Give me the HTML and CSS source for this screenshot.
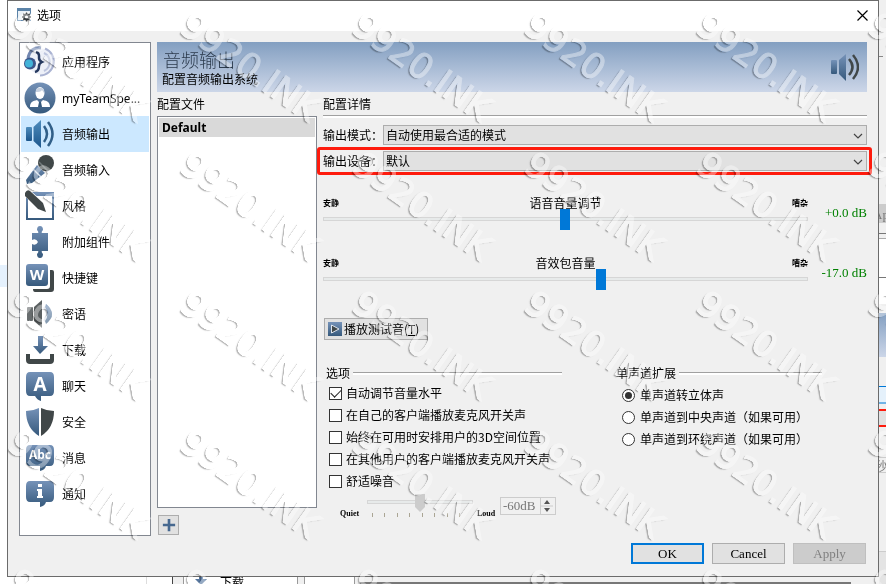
FILE: index.html
```html
<!DOCTYPE html>
<html lang="zh-CN">
<head>
    <meta charset="UTF-8">
    <meta name="viewport" content="width=device-width, initial-scale=1.0">
    <title>选项</title>
    <link rel="stylesheet" href="styles.css">
</head>
<body>

    <!-- 公用渐变和图标 -->
    <svg class="defs" width="0" height="0" aria-hidden="true">
        <defs>
            <linearGradient id="blue" x1="0" y1="0" x2="0" y2="1">
                <stop offset="0" stop-color="#7592b8"/>
                <stop offset="1" stop-color="#36597c"/>
            </linearGradient>
            <linearGradient id="bright" x1="0" y1="0" x2="0" y2="1">
                <stop offset="0" stop-color="#4e8cbc"/>
                <stop offset="1" stop-color="#1c568c"/>
            </linearGradient>
        </defs>
        <symbol id="plus" viewBox="0 0 16 16">
            <path d="M8 1v14M1 8h14" stroke="#46688f" stroke-width="3" fill="none"/>
        </symbol>
        <symbol id="chevron" viewBox="0 0 10 6">
            <path d="M1 1l4 4 4-4" stroke="#444" stroke-width="1.2" fill="none"/>
        </symbol>
    </svg>

    <!-- 后面的窗口 -->
    <div class="back-left"></div>
    <div class="back-right">
        <div class="strip s1"></div>
        <div class="strip s2">Ap</div>
        <div class="strip s3"></div>
        <div class="strip s4"></div>
        <div class="strip s5"></div>
        <div class="strip s6"></div>
        <div class="strip s7"></div>
        <div class="strip s8"></div>
        <div class="strip s9"></div>
        <div class="strip s10">秒</div>
        <div class="strip s11"></div>
        <div class="strip s12"></div>
    </div>
    <div class="back-bottom">
        <div class="piece p1"></div>
        <div class="piece p2"></div>
        <div class="piece p3"></div>
        <div class="piece p4">
            <svg width="12" height="8" viewBox="0 0 12 8"><path d="M4 0h4v2h4L6 8 0 2h4z" fill="#5878a0"/></svg>
            <span>下载</span>
        </div>
        <div class="piece p5"></div>
        <div class="piece p6"></div>
        <div class="piece p7"></div>
    </div>

    <!-- 选项窗口 -->
    <main class="dialog">
        <header class="titlebar">
            <svg width="15" height="14" viewBox="0 0 15 14">
                <rect x=".5" y=".5" width="13" height="12" fill="#eaf1f7" stroke="#5b83a8"/>
                <path d="M0 0h14v3H0z" fill="#5b83a8"/>
                <circle cx="9.500" cy="9" r="5" fill="#fff"/>
                <circle cx="9.500" cy="9" r="2.500" fill="none" stroke="#3d4347" stroke-width="1.800"/>
                <path d="M9.500 4.500v2M9.500 11.500v2M5 9h2M12 9h2M6.300 5.800l1.400 1.400M11.300 10.800l1.400 1.400M6.300 12.200l1.400-1.400M11.300 7.200l1.400-1.400" stroke="#3d4347" stroke-width="1.300"/>
            </svg>
            <h1>选项</h1>
            <button class="close" type="button" aria-label="关闭">
                <svg width="11" height="11" viewBox="0 0 11 11"><path d="M.5.5l10 10M10.500.5l-10 10" stroke="#000" stroke-width="1.200"/></svg>
            </button>
        </header>

        <div class="body">
            <nav class="sidebar">
                <a href="#">
                    <svg viewBox="0 0 32 32">
                        <circle cx="17" cy="15.500" r="13" fill="#edf0f8"/>
                        <path d="M21 2.500a14 14 0 0 1-5 27" fill="none" stroke="#aab3d2" stroke-width="2"/>
                        <path d="M20 7a10 10 0 0 1 0 18" fill="none" stroke="#bdc5de" stroke-width="2"/>
                        <path d="M4 13C5 4 11 1 17 2" fill="none" stroke="#7387b0" stroke-width="3"/>
                        <path d="M12 6c4 1 3 4 3 6s1 3 3 4c-2 1-3 2-3 4s0 5-4 6" fill="none" stroke="#26395f" stroke-width="2.500"/>
                        <circle cx="6" cy="17.500" r="6" fill="#3c568b"/>
                        <circle cx="5" cy="17.500" r="4" fill="#43b3d8"/>
                    </svg>
                    <span>应用程序</span>
                </a>
                <a href="#">
                    <svg viewBox="0 0 32 32">
                        <circle cx="16" cy="16" r="15.500" fill="url(#blue)"/>
                        <path d="M6 25c0-5 3-6 7-7l3 3 3-3c4 1 7 2 7 7z" fill="#fff"/>
                        <ellipse cx="16" cy="11" rx="4.500" ry="6" fill="#fff"/>
                        <path d="M15 20h2l1 5h-4z" fill="#36597c"/>
                        <path d="M12 10c2 0 5 0 6-2l2 3v-3c-1-3-7-3-8 0z" fill="#c6d1e0"/>
                    </svg>
                    <span>myTeamSpe...</span>
                </a>
                <a href="#" class="active">
                    <svg viewBox="0 0 32 32">
                        <rect x="2" y="9" width="6" height="14" rx="1" fill="url(#bright)"/>
                        <path d="M9.500 9L17 2v28l-7.500-7z" fill="url(#bright)"/>
                        <path d="M20 8q6 8 0 16M24 4q9 12 0 24" fill="none" stroke="#315f88" stroke-width="2.500"/>
                    </svg>
                    <span>音频输出</span>
                </a>
                <a href="#">
                    <svg viewBox="0 0 32 32">
                        <path d="M13 11l8 8L8 29l-5 1-1-4z" fill="url(#blue)"/>
                        <path d="M9 15l8 8" stroke="#dfe7f0" stroke-width="1.500"/>
                        <circle cx="22" cy="9" r="8" fill="#404748"/>
                        <path d="M15 8l9 9" stroke="#70787a" stroke-width="1.500"/>
                    </svg>
                    <span>音频输入</span>
                </a>
                <a href="#">
                    <svg viewBox="0 0 32 32">
                        <path d="M2 2h28v28H2zM4 6v22h24V6z" fill="url(#blue)" fill-rule="evenodd"/>
                        <path d="M3 3l14 12" stroke="#fff" stroke-width="8"/>
                        <path d="M1 3q2-4 5-2l13 12 3 9-8-3L1 6z" fill="#404748"/>
                    </svg>
                    <span>风格</span>
                </a>
                <a href="#">
                    <svg viewBox="0 0 32 32">
                        <path d="M8 7h6q1-1-1-3 0-4 3-4t3 4q-2 2-1 3h6v18h-6q-1 1 1 3 0 4-3 4t-3-4q2-2 1-3H8v-7q4 2 6-2-2-4-6-2z" fill="url(#blue)"/>
                    </svg>
                    <span>附加组件</span>
                </a>
                <a href="#">
                    <svg viewBox="0 0 32 32">
                        <path d="M26 8h2q2 0 2 2v17q0 3-3 3H11q-2 0-2-3h14q3 0 3-3z" fill="#404748"/>
                        <rect x="2" y="2" width="22" height="22" rx="3" fill="url(#blue)"/>
                        <text x="13" y="18" text-anchor="middle" class="icon-text w">W</text>
                    </svg>
                    <span>快捷键</span>
                </a>
                <a href="#">
                    <svg viewBox="0 0 32 32">
                        <rect x="3" y="9" width="6" height="14" rx="1" fill="#686d6e"/>
                        <path d="M10 9l8-7v28l-8-7z" fill="#5b6061"/>
                        <path d="M20 9q6 7 0 14" fill="none" stroke="#dfe5ed" stroke-width="2"/>
                        <path d="M22 6q12 10 0 20l-1-3q5-7 0-14z" fill="url(#blue)"/>
                    </svg>
                    <span>密语</span>
                </a>
                <a href="#">
                    <svg viewBox="0 0 32 32">
                        <path d="M14 2h5v10h5l-8 8-7-8h5z" fill="url(#blue)"/>
                        <path d="M2 20h4v5h20v-5h4v6q0 4-4 4H6q-4 0-4-4z" fill="#404748"/>
                    </svg>
                    <span>下载</span>
                </a>
                <a href="#">
                    <svg viewBox="0 0 32 32">
                        <path d="M6 2h20q4 0 4 5v14q0 5-4 5h-9v5q-4-1-6-5H6q-4 0-4-5V7q0-5 4-5z" fill="url(#blue)"/>
                        <text x="16" y="21" text-anchor="middle" class="icon-text a">A</text>
                    </svg>
                    <span>聊天</span>
                </a>
                <a href="#">
                    <svg viewBox="0 0 32 32">
                        <path d="M2 5q7 0 13-3v28Q2 22 2 5z" fill="url(#blue)"/>
                        <path d="M30 5q-7 0-13-3v28Q30 22 30 5z" fill="#404748"/>
                    </svg>
                    <span>安全</span>
                </a>
                <a href="#">
                    <svg viewBox="0 0 32 32">
                        <path d="M6 3h20q4 0 4 5v11q0 5-4 5h-4q-1 4-6 5v-5H6q-4 0-4-5V8q0-5 4-5z" fill="url(#blue)"/>
                        <text x="16" y="17" text-anchor="middle" class="icon-text abc">Abc</text>
                    </svg>
                    <span>消息</span>
                </a>
                <a href="#">
                    <svg viewBox="0 0 32 32">
                        <path d="M6 3h20q4 0 4 5v11q0 5-4 5h-4q-1 4-6 5v-5H6q-4 0-4-5V8q0-5 4-5z" fill="url(#blue)"/>
                        <path d="M14 6h4v3h-4zM13 11h5v7h1v2h-6v-2h1v-5h-1z" fill="#fff"/>
                    </svg>
                    <span>通知</span>
                </a>
            </nav>

            <div class="page">
                <div class="banner">
                    <div>
                        <h2>音频输出</h2>
                        <p>配置音频输出系统</p>
                    </div>
                    <svg width="28" height="28" viewBox="0 0 28 28">
                        <rect x="0" y="7" width="6" height="14" rx="1" fill="url(#blue)"/>
                        <path d="M8 7l7-6v27l-7-7z" fill="url(#blue)"/>
                        <path d="M18 6q7 8 0 16M22 2q10 12 0 24" fill="none" stroke="#404748" stroke-width="2.500"/>
                    </svg>
                </div>

                <div class="columns">
                    <section class="profiles">
                        <h3>配置文件</h3>
                        <ul>
                            <li>Default</li>
                        </ul>
                        <button class="add" type="button" aria-label="添加"><svg width="14" height="14"><use href="#plus"/></svg></button>
                    </section>

                    <section class="details">
                        <h3>配置详情</h3>
                        <div class="field">
                            <label for="mode">输出模式：</label>
                            <div class="select">
                                <select id="mode"><option>自动使用最合适的模式</option></select>
                                <svg width="10" height="6"><use href="#chevron"/></svg>
                            </div>
                        </div>
                        <div class="field marked">
                            <label for="device">输出设备：</label>
                            <div class="select">
                                <select id="device"><option>默认</option></select>
                                <svg width="10" height="6"><use href="#chevron"/></svg>
                            </div>
                        </div>

                        <div class="volume">
                            <div class="track">
                                <div class="names"><small>安静</small><label for="voice">语音音量调节</label><small>嘈杂</small></div>
                                <input id="voice" type="range" min="0" max="1000" value="498">
                            </div>
                            <output for="voice">+0.0 dB</output>
                        </div>
                        <div class="volume">
                            <div class="track">
                                <div class="names"><small>安静</small><label for="pack">音效包音量</label><small>嘈杂</small></div>
                                <input id="pack" type="range" min="0" max="1000" value="575">
                            </div>
                            <output for="pack">-17.0 dB</output>
                        </div>

                        <button class="test" type="button">
                            <svg width="14" height="14" viewBox="0 0 14 14">
                                <rect width="14" height="14" fill="url(#blue)"/>
                                <path d="M3.500 3v8L11 7z" fill="#404748" stroke="#dfe5ed"/>
                            </svg>
                            <span>播放测试音(<u>T</u>)</span>
                        </button>

                        <div class="groups">
                            <fieldset>
                                <legend>选项</legend>
                                <label><input type="checkbox" checked>自动调节音量水平</label>
                                <label><input type="checkbox">在自己的客户端播放麦克风开关声</label>
                                <label><input type="checkbox">始终在可用时安排用户的3D空间位置</label>
                                <label><input type="checkbox">在其他用户的客户端播放麦克风开关声</label>
                                <label><input type="checkbox">舒适噪音</label>
                                <div class="noise">
                                    <span class="quiet">Quiet</span>
                                    <div class="noise-range">
                                        <input type="range" min="0" max="100" value="50" disabled aria-label="舒适噪音音量">
                                        <div class="ticks"><i></i><i></i><i></i><i></i><i></i><i></i><i></i><i></i></div>
                                    </div>
                                    <span class="loud">Loud</span>
                                    <div class="spin">
                                        <input type="text" value="-60dB" disabled aria-label="噪音分贝">
                                        <svg width="13" height="16" viewBox="0 0 13 16">
                                            <path d="M.5 0v16M0 8h13" stroke="#ccc"/>
                                            <path d="M7 2l3 4H4zM7 14l3-4H4z" fill="#555"/>
                                        </svg>
                                    </div>
                                </div>
                            </fieldset>
                            <fieldset>
                                <legend>单声道扩展</legend>
                                <label><input type="radio" name="mono" checked>单声道转立体声</label>
                                <label><input type="radio" name="mono">单声道到中央声道（如果可用）</label>
                                <label><input type="radio" name="mono">单声道到环绕声道（如果可用）</label>
                            </fieldset>
                        </div>
                    </section>
                </div>
            </div>
        </div>

        <footer class="actions">
            <button class="ok" type="button">OK</button>
            <button type="button">Cancel</button>
            <button type="button" disabled>Apply</button>
        </footer>
    </main>

    <!-- 水印 -->
    <div class="watermark" aria-hidden="true">
        <span>9920.INK</span><span>9920.INK</span><span>9920.INK</span><span>9920.INK</span><span>9920.INK</span><span>9920.INK</span>
        <span>9920.INK</span><span>9920.INK</span><span>9920.INK</span><span>9920.INK</span><span>9920.INK</span><span>9920.INK</span>
        <span>9920.INK</span><span>9920.INK</span><span>9920.INK</span><span>9920.INK</span><span>9920.INK</span><span>9920.INK</span>
        <span>9920.INK</span><span>9920.INK</span><span>9920.INK</span><span>9920.INK</span><span>9920.INK</span><span>9920.INK</span>
        <span>9920.INK</span><span>9920.INK</span><span>9920.INK</span><span>9920.INK</span><span>9920.INK</span><span>9920.INK</span>
    </div>

</body>
</html>
```

FILE: styles.css
```css
/* 重置默认样式 */
* {
    margin: 0;
    padding: 0;
    box-sizing: border-box;
}

body {
    position: relative;
    min-height: 100vh;
    display: grid;
    grid-template-columns: 7px minmax(0, 1fr) 7px;
    grid-template-rows: 1fr 7px;
    overflow: hidden;
    background: #fff;
    color: #000;
    font: 12px/16px "Noto Sans CJK SC", sans-serif;
}

h1, h2, h3 {
    font-size: 12px;
    font-weight: normal;
}

button, input, select {
    font: inherit;
    color: inherit;
}

.defs {
    position: absolute;
}

/* 后面的窗口 */
.back-left {
    grid-area: 1 / 1 / 3 / 2;
    background: linear-gradient(#e5f1fd, #e5f1fd) 0 265px / 7px 22px no-repeat;
}

.back-right {
    grid-area: 1 / 3 / 3 / 4;
    display: flex;
    flex-direction: column;
    overflow: hidden;
    background: #f0f0f0;
}

.strip {
    overflow: hidden;
    flex: none;
    color: #777;
}

.s1 { height: 204px; background: linear-gradient(#888, #888) 0 56px / 4px 1px no-repeat; }
.s2 { height: 19px; background: #ccc; font: 13px/22px "Liberation Serif", serif; text-indent: -6px; }
.s3 { height: 11px; border-bottom: 1px solid #777; }
.s4 { height: 5px; border-bottom: 1px solid #aaa; }
.s5 { height: 39px; background: #fff; border-bottom: 1px solid #777; }
.s6 { height: 26px; margin-bottom: 9px; background: #fff; }
.s7 { height: 44px; background: linear-gradient(#839fc1, #ccd6e8); }
.s8 { height: 18px; margin-top: 29px; border-top: 1px solid #0078d7; border-bottom: 2px solid #71b4e6; background: #e5f1fb; }
.s9 { height: 18px; margin-top: 5px; border: solid #fe1b0d; border-width: 2px 0; background: #e1e1e1; }
.s10 { height: 16px; margin-top: 30px; border: solid #ccc; border-width: 1px 0; text-indent: -4px; }
.s11 { height: 79px; border-bottom: 1px solid #ccc; }
.s12 { flex: 1; background: #e4e4e4; }

.back-bottom {
    grid-area: 2 / 2 / 3 / 3;
    display: flex;
    overflow: hidden;
    height: 7px;
    background: #f0f0f0;
}

.piece { border-right: 1px solid #999; }
.p1 { width: 140px; background: #fff; border-color: #ddd; }
.p2 { width: 26px; background: #fff; border-color: #444; }
.p3 { width: 11px; }
.p4 { width: 114px; display: flex; gap: 13px; padding-left: 11px; background: #fff; line-height: 10px; }
.p5 { width: 7px; }
.p6 { width: 50px; background: #fff; }
.p7 { flex: 1; margin: 5px 28px 0 5px; border: 1px solid #777; }

/* 窗口 */
.dialog {
    grid-area: 1 / 2;
    display: flex;
    flex-direction: column;
    border: 1px solid #6b6b6b;
    background: #f0f0f0;
}

.titlebar {
    display: flex;
    align-items: center;
    gap: 5px;
    height: 30px;
    padding: 0 10px 2px 9px;
    background: #fff;
}

.close {
    display: flex;
    margin-left: auto;
    border: none;
    background: none;
}

.body {
    flex: 1;
    display: flex;
    gap: 6px;
    padding: 11px 11px 0;
}

/* 左侧导航 */
.sidebar {
    flex: none;
    width: 132px;
    padding: 1px;
    border: 1px solid #828790;
    background: #fff;
}

.sidebar a {
    display: flex;
    align-items: center;
    gap: 6px;
    height: 36px;
    padding-left: 3px;
    color: #000;
    text-decoration: none;
    white-space: nowrap;
    font-family: "Noto Sans", "Noto Sans CJK SC", sans-serif;
}

.sidebar span {
    padding-top: 2px;
}

.sidebar a.active {
    background: #cce8ff;
}

.sidebar svg {
    flex: none;
    width: 32px;
    height: 32px;
}

.icon-text {
    fill: #fff;
    font-family: "Open Sans", sans-serif;
    font-weight: bold;
}

.icon-text.w { font-size: 15px; }
.icon-text.a { font-size: 19px; }
.icon-text.abc { font-size: 12px; }

.page {
    flex: 1;
    min-width: 0;
    display: flex;
    flex-direction: column;
}

.banner {
    display: flex;
    align-items: center;
    justify-content: space-between;
    height: 50px;
    padding: 0 8px 0 5px;
    background: linear-gradient(#839fc1, #ccd6e8);
}

.banner h2 {
    padding-left: 1px;
    color: #2c3b4d;
    font-size: 18px;
    font-weight: 300;
    line-height: 24px;
}

.columns {
    flex: 1;
    display: flex;
    gap: 6px;
    padding-top: 4px;
}

/* 配置文件 */
.profiles {
    flex: none;
    width: 160px;
    display: flex;
    flex-direction: column;
}

.profiles ul {
    flex: 1;
    margin-top: 4px;
    padding: 1px;
    list-style: none;
    border: 1px solid #828790;
    background: #fff;
}

.profiles li {
    height: 19px;
    padding-left: 3px;
    background: #d9d9d9;
    font: bold 12px/19px "Noto Sans", sans-serif;
}

.add {
    display: flex;
    align-items: center;
    justify-content: center;
    width: 21px;
    height: 20px;
    margin: 7px 0 1px 1px;
    border: 1px solid #adadad;
    background: #e1e1e1;
}

/* 配置详情 */
.details {
    flex: 1;
    min-width: 0;
}

.details h3 {
    height: 22px;
    margin-bottom: 7px;
    border-bottom: 2px solid #fff;
    box-shadow: inset 0 -1px #a0a0a0;
}

.field {
    position: relative;
    display: flex;
    align-items: center;
    height: 20px;
    margin-bottom: 6px;
}

.field label {
    flex: none;
    width: 60px;
    white-space: nowrap;
}

.marked::after {
    content: "";
    position: absolute;
    inset: -4px -5px -4px -6px;
    border: 3px solid #fe1b0d;
    border-radius: 3px;
    pointer-events: none;
}

.select {
    position: relative;
    flex: 1;
}

.select select {
    display: block;
    width: 100%;
    height: 20px;
    padding: 0 24px 0 2px;
    border: 1px solid #adadad;
    border-radius: 0;
    background: #e1e1e1;
    appearance: none;
}

.select svg {
    position: absolute;
    right: 4px;
    top: 8px;
    pointer-events: none;
}

/* 音量 */
.volume {
    display: flex;
    align-items: flex-end;
}

.volume + .volume {
    padding-top: 26px;
}

.field + .volume {
    padding-top: 18px;
}

.track {
    flex: 1;
    min-width: 0;
}

.names {
    display: flex;
    justify-content: space-between;
    height: 14px;
    line-height: 16px;
}

.names small {
    font-size: 8px;
    font-weight: bold;
}

input[type="range"] {
    display: block;
    width: 100%;
    height: 20px;
    background: none;
    appearance: none;
}

input[type="range"]::-webkit-slider-runnable-track {
    height: 4px;
    border: 1px solid #d6d6d6;
    background: #e7eaea;
}

input[type="range"]::-webkit-slider-thumb {
    width: 10px;
    height: 21px;
    margin-top: -9px;
    background: #0078d7;
    appearance: none;
}

.volume output {
    width: 59px;
    padding-bottom: 8px;
    color: #008000;
    text-align: right;
    white-space: nowrap;
    font: 13px/16px "Liberation Serif", serif;
}

.test {
    display: flex;
    align-items: center;
    gap: 2px;
    height: 22px;
    margin: 29px 0 0 1px;
    padding: 0 8px 0 3px;
    border: 1px solid #adadad;
    background: #e1e1e1;
}

/* 选项分组 */
.groups {
    display: grid;
    grid-template-columns: 236fr 206fr;
    gap: 54px;
    padding: 24px 45px 0 3px;
}

fieldset {
    min-width: 0;
    border: none;
}

legend {
    display: flex;
    align-items: center;
    gap: 3px;
    width: 100%;
    height: 18px;
    white-space: nowrap;
}

legend::after {
    content: "";
    flex: 1;
    height: 2px;
    border-top: 1px solid #a0a0a0;
    background: #fff;
}

fieldset label {
    display: flex;
    align-items: center;
    gap: 4px;
    height: 22px;
    padding-left: 3px;
    white-space: nowrap;
}

fieldset + fieldset legend {
    margin-bottom: 2px;
}

fieldset + fieldset label {
    gap: 5px;
    padding-left: 6px;
}

input[type="checkbox"],
input[type="radio"] {
    flex: none;
    display: grid;
    place-items: center;
    width: 13px;
    height: 13px;
    border: 1px solid #333;
    background: #fff;
    appearance: none;
}

input[type="radio"] {
    border-radius: 50%;
}

input[type="checkbox"]:checked::after {
    content: "";
    width: 9px;
    height: 5px;
    margin-bottom: 3px;
    border: solid #222;
    border-width: 0 0 1px 1px;
    transform: rotate(-45deg);
}

input[type="radio"]:checked::after {
    content: "";
    width: 7px;
    height: 7px;
    border-radius: 50%;
    background: #333;
}

.noise {
    display: flex;
    align-items: flex-start;
    height: 23px;
    padding-left: 14px;
}

.quiet,
.loud {
    padding-top: 14px;
    font: bold 8px/16px "Liberation Serif", serif;
}

.quiet {
    width: 27px;
}

.loud {
    width: 27px;
    padding-left: 4px;
}

.noise-range {
    width: 106px;
}

.noise-range input[type="range"]::-webkit-slider-thumb {
    height: 18px;
    margin-top: -7px;
    background: #ccc;
    clip-path: polygon(0 0, 100% 0, 100% 72%, 50% 100%, 0 72%);
}

.ticks {
    display: flex;
    justify-content: space-between;
    padding: 1px 13px 0 5px;
}

.ticks i {
    width: 1px;
    height: 4px;
    background: #aaa594;
}

.spin {
    display: flex;
    width: 56px;
    height: 18px;
    margin-top: 5px;
    flex: none;
    border: 1px solid #ccc;
}

.spin input {
    width: 39px;
    padding-left: 2px;
    border: none;
    background: none;
    color: #777;
    font: 13px/16px "Liberation Serif", serif;
}

/* 底部按钮 */
.actions {
    display: flex;
    justify-content: flex-end;
    gap: 8px;
    padding: 7px 12px 12px;
}

.actions button {
    width: 73px;
    height: 21px;
    border: 1px solid #adadad;
    background: #e1e1e1;
    font: 13px/16px "Liberation Serif", serif;
}

.actions .ok {
    border: 2px solid #0078d7;
}

.actions button:disabled {
    border-color: #bfbfbf;
    background: #ccc;
    color: #808080;
}

/* 水印：中性灰在强光模式下透明，只留下浮雕边缘 */
.watermark {
    position: absolute;
    inset: 0;
    display: grid;
    grid-template-columns: repeat(6, 172px);
    grid-auto-rows: 139px;
    padding: 7px 0 0 11px;
    overflow: hidden;
    pointer-events: none;
    mix-blend-mode: hard-light;
}

.watermark span {
    color: #b0b0b0;
    font: 35px/40px "DejaVu Sans", sans-serif;
    -webkit-text-stroke: 1px #b0b0b0;
    text-shadow: -1px 2px 1px rgba(70, 70, 70, 0.65);
    transform: rotate(35deg);
    transform-origin: 10px 20px;
}
```
